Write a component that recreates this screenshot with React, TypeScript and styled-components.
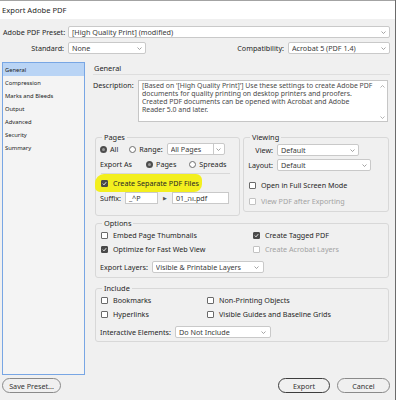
import React from 'react';
import styled, { createGlobalStyle } from 'styled-components';

const GlobalStyle = createGlobalStyle`
  html, body {
    margin: 0;
    padding: 0;
    background: #ffffff;
  }
  body {
    font-family: 'Noto Sans', 'DejaVu Sans', sans-serif;
    font-size: 7.2px;
    color: #262626;
  }
`;

const Window = styled.div`
  width: 396px;
  height: 400px;
  box-sizing: border-box;
  border-right: 1px solid #6b6b6b;
  background: #f0f0f0;
  display: flex;
  flex-direction: column;
  overflow: hidden;
`;

const TitleBar = styled.div`
  height: 19px;
  box-sizing: border-box;
  border-top: 1px solid #a3a3a3;
  background: #ffffff;
  padding-left: 2px;
  display: flex;
  align-items: center;
  font-size: 7.6px;
  color: #1f1f1f;
`;

const TopForm = styled.div`
  padding: 7px 5px 0 3px;
  display: flex;
  flex-direction: column;
  gap: 4px;
`;

const FormRow = styled.div`
  display: flex;
  align-items: center;
  height: 12px;
`;

const FieldLabel = styled.span<{ $width?: number; $align?: string }>`
  width: ${({ $width }) => ($width ? `${$width}px` : 'auto')};
  flex: none;
  text-align: ${({ $align }) => $align || 'left'};
  margin-right: 4px;
  white-space: nowrap;
  color: #262626;
`;

const Spacer = styled.div`
  flex: 1;
`;

const SelectBox = styled.div<{ $width?: number }>`
  ${({ $width }) => ($width ? `width: ${$width}px; flex: none;` : 'flex: 1;')}
  height: 12px;
  box-sizing: border-box;
  display: flex;
  align-items: center;
  background: #ffffff;
  border: 1px solid #c9c9c9;
  border-radius: 2px;
  padding-left: 3px;
  color: #3a3a3a;
`;

const SelectValue = styled.span`
  flex: 1;
  white-space: nowrap;
  overflow: hidden;
`;

const SelectArrow = styled.span<{ $split?: boolean }>`
  width: ${({ $split }) => ($split ? '10px' : '12px')};
  height: 100%;
  display: flex;
  align-items: center;
  justify-content: center;
  border-left: ${({ $split }) => ($split ? '1px solid #c9c9c9' : 'none')};
`;

const Chevron = () => (
  <svg width="5" height="3" viewBox="0 0 5 3">
    <polyline points="0.5,0.5 2.5,2.5 4.5,0.5" fill="none" stroke="#8c8c8c" strokeWidth="0.8" />
  </svg>
);

const Select: React.FC<{ value: string; width?: number; split?: boolean }> = ({ value, width, split }) => (
  <SelectBox $width={width}>
    <SelectValue>{value}</SelectValue>
    <SelectArrow $split={split}>
      <Chevron />
    </SelectArrow>
  </SelectBox>
);

const Main = styled.div`
  margin-top: 8px;
  height: 313px;
  padding: 0 5px 0 2px;
  display: flex;
`;

const Sidebar = styled.div`
  width: 83px;
  flex: none;
  box-sizing: border-box;
  border: 1px solid #78a6e4;
  background: #f4f4f4;
  display: flex;
  flex-direction: column;
`;

const SidebarItem = styled.div<{ $active?: boolean }>`
  height: 13px;
  display: flex;
  align-items: center;
  padding-left: 2px;
  font-size: 5.8px;
  color: #222;
  background: ${({ $active }) => ($active ? '#b9d4f5' : 'transparent')};
`;

const Content = styled.div`
  flex: 1;
  margin-left: 8px;
  display: flex;
  flex-direction: column;
`;

const SectionHeading = styled.div`
  height: 13px;
  box-sizing: border-box;
  border-bottom: 1px solid #dedede;
  display: flex;
  align-items: center;
  padding-left: 1px;
  font-size: 7.4px;
`;

const DescRow = styled.div`
  margin-top: 5px;
  display: flex;
  align-items: flex-start;
`;

const DescLabel = styled.span`
  width: 45px;
  flex: none;
  padding-top: 1px;
  line-height: 8px;
`;

const DescBox = styled.div`
  flex: 1;
  margin-right: 2px;
  height: 42px;
  box-sizing: border-box;
  background: #ffffff;
  border: 1px solid #c6c6c6;
  display: flex;
`;

const DescText = styled.div`
  flex: 1;
  padding: 1px 0 0 3px;
  font-size: 6.9px;
  line-height: 8px;
  color: #4a4a4a;
  white-space: nowrap;
  overflow: hidden;
`;

const ScrollTrack = styled.div`
  width: 9px;
  display: flex;
  flex-direction: column;
  justify-content: space-between;
  align-items: center;
  padding: 4px 0 2px;
`;

const ScrollArrow = ({ up }: { up?: boolean }) => (
  <svg width="5" height="3" viewBox="0 0 5 3">
    <polyline
      points={up ? '0.5,2.5 2.5,0.5 4.5,2.5' : '0.5,0.5 2.5,2.5 4.5,0.5'}
      fill="none"
      stroke="#a0a0a0"
      strokeWidth="0.8"
    />
  </svg>
);

const GroupRow = styled.div`
  margin-top: 10px;
  padding-left: 2px;
  display: flex;
  align-items: flex-start;
  gap: 3px;
`;

const Group = styled.fieldset<{ $width?: number; $height: number; $top?: number }>`
  margin: ${({ $top }) => $top || 0}px 0 0 ${({ $width }) => ($width ? 0 : 2)}px;
  ${({ $width }) => ($width ? `width: ${$width}px;` : 'width: 294px;')}
  height: ${({ $height }) => $height}px;
  box-sizing: border-box;
  min-inline-size: 0;
  padding: 0 4px;
  border: 1px solid #d8d8d8;
  border-radius: 3px;
  display: flex;
  flex-direction: column;
`;

const GroupTitle = styled.legend`
  margin-left: 2px;
  padding: 0 2px;
  line-height: 10px;
  font-size: 7.4px;
  color: #262626;
`;

const Row = styled.div<{ $gap?: number }>`
  height: 12px;
  margin-top: ${({ $gap }) => $gap ?? 3}px;
  display: flex;
  align-items: center;
  white-space: nowrap;
`;

const TwoCol = styled.div<{ $first: number; $gap?: number }>`
  margin-top: ${({ $gap }) => $gap ?? 2}px;
  height: 12px;
  display: grid;
  grid-template-columns: ${({ $first }) => $first}px 1fr;
  align-items: center;
  white-space: nowrap;
`;

const Radio = styled.span<{ $checked?: boolean; $gapLeft?: number }>`
  width: 7px;
  height: 7px;
  box-sizing: border-box;
  flex: none;
  border-radius: 50%;
  margin-left: ${({ $gapLeft }) => $gapLeft || 0}px;
  margin-right: 3px;
  background: ${({ $checked }) => ($checked ? '#9a9a9a' : '#ffffff')};
  border: ${({ $checked }) => ($checked ? '2px solid #4d4d4d' : '1px solid #6e6e6e')};
`;

const CheckBox = styled.span<{ $checked?: boolean; $disabled?: boolean }>`
  width: 7px;
  height: 7px;
  box-sizing: border-box;
  flex: none;
  margin: 0 5px 0 1px;
  border-radius: 1px;
  border: 1px solid ${({ $checked, $disabled }) => ($disabled ? '#c2c2c2' : $checked ? '#4a4a4a' : '#6a6a6a')};
  background: ${({ $checked }) => ($checked ? '#4a4a4a' : '#ffffff')};
  display: flex;
  align-items: center;
  justify-content: center;
`;

const CheckText = styled.span<{ $disabled?: boolean }>`
  color: ${({ $disabled }) => ($disabled ? '#a3a3a3' : '#262626')};
`;

const CheckItem: React.FC<{ label: string; checked?: boolean; disabled?: boolean }> = ({ label, checked, disabled }) => (
  <Row as="span" $gap={0}>
    <CheckBox $checked={checked} $disabled={disabled}>
      {checked && (
        <svg width="5" height="5" viewBox="0 0 5 5">
          <polyline points="0.8,2.6 2,3.8 4.2,1.2" fill="none" stroke="#ffffff" strokeWidth="0.9" />
        </svg>
      )}
    </CheckBox>
    <CheckText $disabled={disabled}>{label}</CheckText>
  </Row>
);

const Highlight = styled.span`
  display: inline-flex;
  align-items: center;
  margin: -3px 0 -3px -5px;
  padding: 3px 3px 3px 5px;
  background: #f3ef1e;
  border-radius: 9px 6px 8px 5px;
`;

const Separator = styled.div`
  margin: 3px 5px 0 1px;
  border-top: 1px solid #d8d8d8;
`;

const TextInput = styled.span<{ $width: number }>`
  width: ${({ $width }) => $width}px;
  height: 12px;
  box-sizing: border-box;
  display: flex;
  align-items: center;
  background: #ffffff;
  border: 1px solid #c9c9c9;
  padding-left: 3px;
  color: #333;
`;

const LinkArrow = styled.span`
  width: 14px;
  text-align: center;
  font-size: 5px;
  color: #555;
`;

const Footer = styled.div`
  margin-top: 3px;
  height: 15px;
  padding: 0 5px 0 2px;
  display: flex;
  gap: 7px;
`;

const PillButton = styled.button<{ $width: number; $primary?: boolean }>`
  width: ${({ $width }) => $width}px;
  height: 15px;
  box-sizing: border-box;
  padding: 0;
  font-family: inherit;
  font-size: 7.2px;
  color: #333;
  background: #f0f0f0;
  border: ${({ $primary }) => ($primary ? '1.4px solid #3d3d3d' : '1px solid #8a8a8a')};
  border-radius: 8px;
`;

export default function App() {
  return (
    <>
      <GlobalStyle />
      <Window>
        <TitleBar>Export Adobe PDF</TitleBar>

        <TopForm>
          <FormRow>
            <FieldLabel $width={61} $align="right">Adobe PDF Preset:</FieldLabel>
            <Select value="[High Quality Print] (modified)" />
          </FormRow>
          <FormRow>
            <FieldLabel $width={61} $align="right">Standard:</FieldLabel>
            <Select value="None" width={78} />
            <Spacer />
            <FieldLabel>Compatibility:</FieldLabel>
            <Select value="Acrobat 5 (PDF 1.4)" width={102} />
          </FormRow>
        </TopForm>

        <Main>
          <Sidebar>
            <SidebarItem $active>General</SidebarItem>
            <SidebarItem>Compression</SidebarItem>
            <SidebarItem>Marks and Bleeds</SidebarItem>
            <SidebarItem>Output</SidebarItem>
            <SidebarItem>Advanced</SidebarItem>
            <SidebarItem>Security</SidebarItem>
            <SidebarItem>Summary</SidebarItem>
          </Sidebar>

          <Content>
            <SectionHeading>General</SectionHeading>

            <DescRow>
              <DescLabel>Description:</DescLabel>
              <DescBox>
                <DescText>
                  [Based on '[High Quality Print]'] Use these settings to create Adobe PDF
                  <br />
                  documents for quality printing on desktop printers and proofers.
                  <br />
                  Created PDF documents can be opened with Acrobat and Adobe
                  <br />
                  Reader 5.0 and later.
                </DescText>
                <ScrollTrack>
                  <ScrollArrow up />
                  <ScrollArrow />
                </ScrollTrack>
              </DescBox>
            </DescRow>

            <GroupRow>
              <Group $width={145} $height={84}>
                <GroupTitle>Pages</GroupTitle>
                <Row $gap={1}>
                  <Radio $checked />
                  <span>All</span>
                  <Radio $gapLeft={11} />
                  <FieldLabel>Range:</FieldLabel>
                  <Select value="All Pages" width={58} split />
                </Row>
                <Row>
                  <span>Export As</span>
                  <Radio $checked $gapLeft={14} />
                  <span>Pages</span>
                  <Radio $gapLeft={13} />
                  <span>Spreads</span>
                </Row>
                <Separator />
                <Row>
                  <Highlight>
                    <CheckItem label="Create Separate PDF Files" checked />
                  </Highlight>
                </Row>
                <Row>
                  <FieldLabel>Suffix:</FieldLabel>
                  <TextInput $width={33}>_^P</TextInput>
                  <LinkArrow>▶</LinkArrow>
                  <TextInput $width={57}>
                    <bdo dir="ltr">01_הו.pdf</bdo>
                  </TextInput>
                </Row>
              </Group>

              <Group $width={146} $height={80}>
                <GroupTitle>Viewing</GroupTitle>
                <Row $gap={2}>
                  <FieldLabel $width={25} $align="right">View:</FieldLabel>
                  <Select value="Default" width={82} />
                </Row>
                <Row>
                  <FieldLabel $width={25} $align="right">Layout:</FieldLabel>
                  <Select value="Default" width={94} />
                </Row>
                <Row $gap={8}>
                  <CheckItem label="Open in Full Screen Mode" />
                </Row>
                <Row $gap={4}>
                  <CheckItem label="View PDF after Exporting" disabled />
                </Row>
              </Group>
            </GroupRow>

            <Group $height={60} $top={2}>
              <GroupTitle>Options</GroupTitle>
              <TwoCol $first={152} $gap={1}>
                <CheckItem label="Embed Page Thumbnails" />
                <CheckItem label="Create Tagged PDF" checked />
              </TwoCol>
              <TwoCol $first={152}>
                <CheckItem label="Optimize for Fast Web View" checked />
                <CheckItem label="Create Acrobat Layers" disabled />
              </TwoCol>
              <Row $gap={6}>
                <FieldLabel>Export Layers:</FieldLabel>
                <Select value="Visible &amp; Printable Layers" width={112} />
              </Row>
            </Group>

            <Group $height={59} $top={5}>
              <GroupTitle>Include</GroupTitle>
              <TwoCol $first={106} $gap={1}>
                <CheckItem label="Bookmarks" />
                <CheckItem label="Non-Printing Objects" />
              </TwoCol>
              <TwoCol $first={106}>
                <CheckItem label="Hyperlinks" />
                <CheckItem label="Visible Guides and Baseline Grids" />
              </TwoCol>
              <Row $gap={6}>
                <FieldLabel>Interactive Elements:</FieldLabel>
                <Select value="Do Not Include" width={96} />
              </Row>
            </Group>
          </Content>
        </Main>

        <Footer>
          <PillButton $width={59}>Save Preset...</PillButton>
          <Spacer />
          <PillButton $width={52} $primary>Export</PillButton>
          <PillButton $width={53}>Cancel</PillButton>
        </Footer>
      </Window>
    </>
  );
}
